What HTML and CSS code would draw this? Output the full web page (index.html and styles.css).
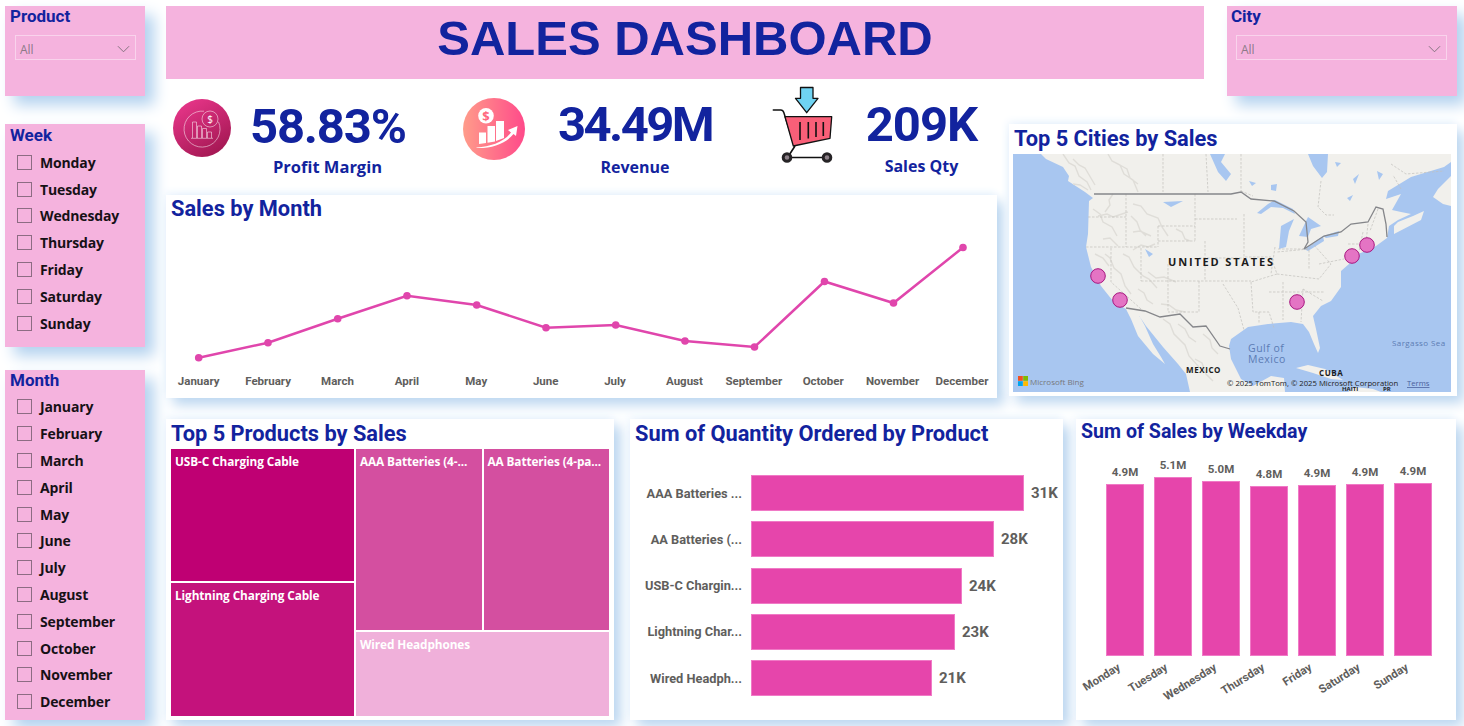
FILE: index.html
```html
<!DOCTYPE html>
<html lang="en">
<head>
    <meta charset="UTF-8">
    <meta name="viewport" content="width=device-width, initial-scale=1.0">
    <title>Sales Dashboard</title>
    <link rel="stylesheet" href="styles.css">
</head>
<body>
    <div class="page">
        <aside class="sidebar">
            <section class="panel panel-product">
                <h3 class="panel-title">Product</h3>
                <div class="dropdown"><span>All</span>
                    <svg class="chevron" viewBox="0 0 14 8"><path d="M1 1l6 6 6-6"/></svg>
                </div>
            </section>
            <section class="panel panel-week">
                <h3 class="panel-title">Week</h3>
                <ul class="slicer">
                    <li><i class="check"></i>Monday</li>
                    <li><i class="check"></i>Tuesday</li>
                    <li><i class="check"></i>Wednesday</li>
                    <li><i class="check"></i>Thursday</li>
                    <li><i class="check"></i>Friday</li>
                    <li><i class="check"></i>Saturday</li>
                    <li><i class="check"></i>Sunday</li>
                </ul>
            </section>
            <section class="panel panel-month">
                <h3 class="panel-title">Month</h3>
                <ul class="slicer">
                    <li><i class="check"></i>January</li>
                    <li><i class="check"></i>February</li>
                    <li><i class="check"></i>March</li>
                    <li><i class="check"></i>April</li>
                    <li><i class="check"></i>May</li>
                    <li><i class="check"></i>June</li>
                    <li><i class="check"></i>July</li>
                    <li><i class="check"></i>August</li>
                    <li><i class="check"></i>September</li>
                    <li><i class="check"></i>October</li>
                    <li><i class="check"></i>November</li>
                    <li><i class="check"></i>December</li>
                </ul>
            </section>
        </aside>

        <main class="main">
            <div class="upper">
                <header class="banner"><h1>SALES DASHBOARD</h1></header>

                <section class="panel panel-city">
                    <h3 class="panel-title">City</h3>
                    <div class="dropdown"><span>All</span>
                        <svg class="chevron" viewBox="0 0 14 8"><path d="M1 1l6 6 6-6"/></svg>
                    </div>
                </section>

                <div class="kpis">
                    <div class="kpi kpi-margin">
                        <svg class="kpi-icon" width="58" height="58" viewBox="0 0 58 58">
                            <defs>
                                <linearGradient id="gradMargin" x1="0.2" y1="0" x2="0.8" y2="1">
                                    <stop offset="0" stop-color="#e8368a"/>
                                    <stop offset="1" stop-color="#a01650"/>
                                </linearGradient>
                            </defs>
                            <circle cx="29" cy="29" r="29" fill="url(#gradMargin)"/>
                            <g fill="none" stroke="#fff" stroke-width="0.6" opacity="0.85">
                                <path d="M31 12.200a18 18 0 1 0 14.500 10.600"/>
                                <circle cx="37" cy="20" r="8"/>
                                <path d="M19.500 39V23h4v16M24.500 39V27h4v12M29.500 39v-9.500h4V39M34.500 39v-6h4v6M18 39.300h22"/>
                            </g>
                            <text class="icon-dollar" x="37" y="23.500" text-anchor="middle">$</text>
                        </svg>
                        <div class="kpi-text">
                            <div class="kpi-value">58.83%</div>
                            <div class="kpi-label">Profit Margin</div>
                        </div>
                    </div>

                    <div class="kpi kpi-revenue">
                        <svg class="kpi-icon" width="62" height="62" viewBox="0 0 62 62">
                            <defs>
                                <linearGradient id="gradRevenue" x1="0" y1="0" x2="1" y2="0">
                                    <stop offset="0" stop-color="#ff9c8a"/>
                                    <stop offset="1" stop-color="#ff4a8a"/>
                                </linearGradient>
                            </defs>
                            <circle cx="31" cy="31" r="31" fill="url(#gradRevenue)"/>
                            <circle cx="23" cy="17.700" r="7.800" fill="#fff"/>
                            <text class="icon-dollar-red" x="23" y="22.500" text-anchor="middle">$</text>
                            <path fill="#fff" d="M16 34.500h7v10.500l-7 1zM24.500 28h7.500v15.500l-7.500 1.200zM33 23h8v17l-8 3z"/>
                            <path fill="#fff" d="M13.500 49.500c14-1 27-5 34.500-15l-3-2.500 9.500-4-1.500 10-2.500-2c-8 10-22 14.500-37 14z"/>
                        </svg>
                        <div class="kpi-text">
                            <div class="kpi-value">34.49M</div>
                            <div class="kpi-label">Revenue</div>
                        </div>
                    </div>

                    <div class="kpi kpi-qty">
                        <svg class="kpi-icon" width="64" height="80" viewBox="0 0 64 80">
                            <path d="M30.500 2.500h12.500v10.800h5L36.700 27.700 25.500 13.300h5z" fill="#6fd3f2" stroke="#111" stroke-width="1.300" stroke-linejoin="round"/>
                            <path d="M3.300 25h7.500c1.500 0 2.500 1 3 2.500L23.500 58" fill="none" stroke="#111" stroke-width="1.500" stroke-linecap="round"/>
                            <path d="M15 31.700h46.700L60 53.300 23.300 61z" fill="#f95f78" stroke="#111" stroke-width="1.300" stroke-linejoin="round"/>
                            <path d="M30 37v18M38.300 37v16.500M46 37v15M53.300 37v14" stroke="#111" stroke-width="1.600" fill="none"/>
                            <path d="M25 61l-6.500 10M18 72.500h38" stroke="#111" stroke-width="1.600" fill="none"/>
                            <circle cx="17" cy="72.500" r="3.800" fill="#8c8088" stroke="#262326" stroke-width="3"/>
                            <circle cx="57" cy="72.500" r="3.800" fill="#8c8088" stroke="#262326" stroke-width="3"/>
                        </svg>
                        <div class="kpi-text">
                            <div class="kpi-value">209K</div>
                            <div class="kpi-label">Sales Qty</div>
                        </div>
                    </div>
                </div>

                <section class="card card-month">
                    <h2 class="card-title">Sales by Month</h2>
                    <svg class="line-chart" width="831" height="145" viewBox="0 0 831 145">
                        <polyline points="32.700,132.700 102,117.700 171.700,93.700 241,70.700 310.700,80 380,102.700 449.700,100 519,116 588.500,122 658.500,56.500 727.500,78 797,22.500"/>
                        <g>
                            <circle cx="32.700" cy="132.700" r="3.800"/>
                            <circle cx="102" cy="117.700" r="3.800"/>
                            <circle cx="171.700" cy="93.700" r="3.800"/>
                            <circle cx="241" cy="70.700" r="3.800"/>
                            <circle cx="310.700" cy="80" r="3.800"/>
                            <circle cx="380" cy="102.700" r="3.800"/>
                            <circle cx="449.700" cy="100" r="3.800"/>
                            <circle cx="519" cy="116" r="3.800"/>
                            <circle cx="588.500" cy="122" r="3.800"/>
                            <circle cx="658.500" cy="56.500" r="3.800"/>
                            <circle cx="727.500" cy="78" r="3.800"/>
                            <circle cx="797" cy="22.500" r="3.800"/>
                        </g>
                    </svg>
                    <div class="month-axis">
                        <span>January</span><span>February</span><span>March</span><span>April</span>
                        <span>May</span><span>June</span><span>July</span><span>August</span>
                        <span>September</span><span>October</span><span>November</span><span>December</span>
                    </div>
                </section>

                <section class="card card-map">
                    <h2 class="card-title">Top 5 Cities by Sales</h2>
                    <svg class="map" width="438" height="238" viewBox="0 0 438 238">
                        <rect width="438" height="238" fill="#a8c6f0"/>
                        <!-- land -->
                        <path class="land" d="M28 0L33 5 50 13 56 22 55 27 72 38 80 44 76 47 75 80 73 93 78 113 88 132 100 147 113 155 118 165 125 182 140 200 152 210 148 203 140 190 132 172 127 163 123 157 133 172 150 193 165 210 173 220 177 238H272L271 224 258 222 240 232 228 225 218 205 216 192 218 185 235 173 255 170 278 168 290 170 296 178 301 190 305 199 307 194 303 175 300 162 308 152 318 147 328 133 328 117 336 110 338 107 345 100 353 97 363 92 374 84 376 72 385 66 398 60 388 58 379 56 388 40 373 45 375 37 398 23 431 13 438 8V0H315L314 18 309 24 300 12 295 0Z"/>
                        <path class="land" d="M381 80L408 66 411 57 400 62 385 68 381 72Z"/>
                        <path class="land" d="M420 43L425 35 438 22V52L430 50Z"/>
                        <path class="land" d="M283 214L295 211 312 215 330 226 318 225 300 219Z"/>
                        <path class="land" d="M335 238L342 233 360 235 368 238Z"/>
                        <!-- lakes -->
                        <path class="water" d="M244 59L255 50 262 46 280 55 282 60 270 54 258 53 248 60ZM266 95L268 72 281 65 276 77 273 93ZM286 82L295 63 308 72 298 75 295 83ZM291 95L310 82 311 87 295 97ZM310 82L326 77 325 82 313 84ZM197 0L205 18 213 27 218 20 208 8 212 0ZM150 48L170 47 158 53ZM132 95L140 100 136 103ZM258 31L264 30 263 37 258 36ZM236 27L243 29 239 32ZM334 44L340 41 337 47ZM340 25L346 20 342 30ZM364 17L370 20 366 26ZM322 8L328 9 324 13Z"/>
                        <!-- terrain -->
                        <path class="terrain" d="M50 0L56 9 62 12 66 22 74 28 78 36M95 0L99 7 107 11 111 20 120 26 125 38M80 55L87 60 90 68 99 73 104 82M85 62L94 60 100 63 115 58M120 50L128 52 134 60 145 64 149 73 155 82M118 62L124 68 127 76 133 82M92 100L97 104 101 114 108 120 112 132 118 140M110 100L116 103 121 113 130 122 136 125 144 134M135 118L143 124 151 123 163 128M148 150L156 151 163 156 172 158M150 165L157 170 161 180 172 191 176 202 186 213M165 170L172 175 176 183 183 188M182 205L189 209 193 220 200 227M120 78L127 77 138 82M60 5L66 11 72 14 82 31M100 40L96 46 97 51 92 58M120 96L128 91 135 93 142 90M163 75L169 78 172 85 177 87M90 85L97 84 105 92M82 100L90 104 96 112M125 135L131 139 134 146 140 150M190 180L197 186 199 194 205 200M60 30L67 31 75 36M105 10L114 15 117 24 125 30"/>
                        <!-- state and province lines -->
                        <path class="state" d="M150 0V38M193 0L195 38M228 0V37M113 40V93M75 63H113M73 93H145M98 94V128L128 155M128 94V127M145 72H182M145 72V93M182 40V87M182 65H224M145 87H182M155 110V158M128 127H238M192 87V127M186 127V158H155M186 104H231M210 130L225 154 231 176M238 128L240 158H256L261 174M231 60V103H258L264 120 238 128M264 120L306 125 318 110 300 90 296 95 264 98M265 95H297M262 93L258 120M296 96V116M306 110L331 105M350 78L345 102M335 90H351M270 128V166M246 158V170M256 138H312M290 135L288 168M290 135L310 147M308 27L305 53 313 61H321M378 10L393 20 431 17M388 35L380 21M365 55L357 77M355 70L353 88M228 37L240 42"/>
                        <!-- national borders -->
                        <path class="border" d="M81 40H218L228 38 238 45 261 47 281 57 293 68 295 88 291 95 311 82 328 78 338 70 355 68 363 53 370 55 373 70 374 83"/>
                        <path class="border" d="M113 154L132 157 147 163 167 160 180 173 193 172 207 192 217 195"/>
                        <!-- labels -->
                        <text class="map-country" x="155" y="112" textLength="105">UNITED STATES</text>
                        <text class="map-sea" x="235" y="198">Gulf of</text>
                        <text class="map-sea" x="235" y="209">Mexico</text>
                        <text class="map-small-country" x="173" y="219">MEXICO</text>
                        <text class="map-small-country" x="306" y="222">CUBA</text>
                        <text class="map-tiny" x="329" y="237">HAITI</text>
                        <text class="map-tiny" x="370" y="237">PR</text>
                        <text class="map-sea-small" x="379" y="192">Sargasso Sea</text>
                        <!-- cities -->
                        <g class="cities">
                            <circle cx="85" cy="122" r="7.300"/>
                            <circle cx="107" cy="146" r="7.300"/>
                            <circle cx="284" cy="148" r="7.300"/>
                            <circle cx="339" cy="102" r="7.300"/>
                            <circle cx="354" cy="91" r="7.300"/>
                        </g>
                        <!-- bing logo -->
                        <rect x="5" y="222" width="4.800" height="4.800" fill="#f25022"/>
                        <rect x="10.200" y="222" width="4.800" height="4.800" fill="#7fba00"/>
                        <rect x="5" y="227.200" width="4.800" height="4.800" fill="#00a4ef"/>
                        <rect x="10.200" y="227.200" width="4.800" height="4.800" fill="#ffb900"/>
                        <text class="map-credit bing" x="17" y="230.500">Microsoft Bing</text>
                        <text class="map-credit" x="214" y="232">© 2025 TomTom, © 2025 Microsoft Corporation</text>
                        <text class="map-credit terms" x="394" y="232">Terms</text>
                    </svg>
                </section>
            </div>

            <div class="lower">
                <section class="card card-products">
                    <h2 class="card-title">Top 5 Products by Sales</h2>
                    <div class="treemap">
                        <div class="tm-col tm-left">
                            <div class="tile tile-usbc">USB-C Charging Cable</div>
                            <div class="tile tile-lightning">Lightning Charging Cable</div>
                        </div>
                        <div class="tm-col tm-right">
                            <div class="tm-row">
                                <div class="tile tile-aaa">AAA Batteries (4-...</div>
                                <div class="tile tile-aa">AA Batteries (4-pa...</div>
                            </div>
                            <div class="tile tile-wired">Wired Headphones</div>
                        </div>
                    </div>
                </section>

                <section class="card card-qty">
                    <h2 class="card-title">Sum of Quantity Ordered by Product</h2>
                    <div class="hbars">
                        <div class="hbar"><span class="hbar-label">AAA Batteries ...</span><span class="hbar-fill" style="width: 273px"></span><span class="hbar-value">31K</span></div>
                        <div class="hbar"><span class="hbar-label">AA Batteries (...</span><span class="hbar-fill" style="width: 243px"></span><span class="hbar-value">28K</span></div>
                        <div class="hbar"><span class="hbar-label">USB-C Chargin...</span><span class="hbar-fill" style="width: 211px"></span><span class="hbar-value">24K</span></div>
                        <div class="hbar"><span class="hbar-label">Lightning Char...</span><span class="hbar-fill" style="width: 204px"></span><span class="hbar-value">23K</span></div>
                        <div class="hbar"><span class="hbar-label">Wired Headph...</span><span class="hbar-fill" style="width: 181px"></span><span class="hbar-value">21K</span></div>
                    </div>
                </section>

                <section class="card card-weekday">
                    <h2 class="card-title">Sum of Sales by Weekday</h2>
                    <div class="vbars">
                        <div class="vbar"><span class="vbar-value">4.9M</span><span class="vbar-fill" style="height: 172px"></span><span class="vbar-label">Monday</span></div>
                        <div class="vbar"><span class="vbar-value">5.1M</span><span class="vbar-fill" style="height: 179px"></span><span class="vbar-label">Tuesday</span></div>
                        <div class="vbar"><span class="vbar-value">5.0M</span><span class="vbar-fill" style="height: 175px"></span><span class="vbar-label">Wednesday</span></div>
                        <div class="vbar"><span class="vbar-value">4.8M</span><span class="vbar-fill" style="height: 170px"></span><span class="vbar-label">Thursday</span></div>
                        <div class="vbar"><span class="vbar-value">4.9M</span><span class="vbar-fill" style="height: 171px"></span><span class="vbar-label">Friday</span></div>
                        <div class="vbar"><span class="vbar-value">4.9M</span><span class="vbar-fill" style="height: 172px"></span><span class="vbar-label">Saturday</span></div>
                        <div class="vbar"><span class="vbar-value">4.9M</span><span class="vbar-fill" style="height: 173px"></span><span class="vbar-label">Sunday</span></div>
                    </div>
                </section>
            </div>
        </main>
    </div>
</body>
</html>
```

FILE: styles.css
```css
* {
    box-sizing: border-box;
}

html, body {
    height: 100%;
}

body {
    margin: 0;
    background-color: #fff;
    font-family: Roboto, "Liberation Sans", sans-serif;
    overflow: hidden;
}

h1, h2, h3, ul {
    margin: 0;
    padding: 0;
}

.page {
    display: flex;
    gap: 21px;
    padding: 6px 0 0 5px;
}

/* left column with the slicers */
.sidebar {
    width: 140px;
    flex: none;
    display: flex;
    flex-direction: column;
}

.panel {
    background-color: #f5b3de;
    box-shadow: 9px 9px 14px #b3d2ef;
}

.panel-product { height: 90px; }
.panel-week { height: 223px; margin-top: 28px; }
.panel-month { height: 350px; margin-top: 23px; }

.panel-title {
    height: 25px;
    padding-left: 5px;
    font-size: 17px;
    line-height: 20px;
    font-weight: 700;
    color: #12239e;
}

.panel-week .panel-title {
    padding-top: 1px;
}

.panel-city .panel-title {
    padding-left: 4px;
}

.dropdown {
    display: flex;
    justify-content: space-between;
    align-items: center;
    height: 25px;
    margin: 4px 9px 0 10px;
    padding: 3px 5px 0 4px;
    border: 1px solid #f9d3ec;
    font-family: "Open Sans", sans-serif;
    font-size: 12px;
    color: #8d7a88;
}

.chevron {
    width: 13px;
    height: 8px;
    fill: none;
    stroke: #7d6f7a;
    stroke-width: 1;
}

.slicer {
    list-style: none;
}

.panel-month .slicer {
    margin-top: -1.5px;
}

.slicer li {
    display: flex;
    align-items: center;
    gap: 8px;
    height: 26.8px;
    padding-left: 12px;
    font-family: "Open Sans", sans-serif;
    font-size: 14px;
    font-weight: 700;
    letter-spacing: -0.15px;
    color: #161116;
}

.check {
    width: 15px;
    height: 15px;
    border: 1px solid #8d6c83;
}

/* main area */
.main {
    width: 1291px;
    flex: none;
}

.upper {
    display: grid;
    grid-template-columns: 831px 12px 195px 23px 230px;
    grid-template-rows: 73px 45px 71px 203px;
}

.banner {
    grid-column: 1 / 4;
    grid-row: 1;
    display: flex;
    align-items: center;
    justify-content: center;
    background-color: #f5b3de;
}

.banner h1 {
    font-family: "Liberation Sans", Arial, sans-serif;
    font-size: 49px;
    font-weight: 700;
    color: #12239e;
    padding-bottom: 10px;
}

.panel-city {
    grid-column: 5;
    grid-row: 1 / 3;
    height: 90px;
}

.panel-city .dropdown {
    margin-left: 9px;
    margin-right: 10px;
}

.kpis {
    grid-column: 1;
    grid-row: 2 / 4;
    display: flex;
    align-items: flex-start;
}

.kpi {
    display: flex;
    flex: none;
}

.kpi-margin { margin-left: 7px; padding-top: 20px; }
.kpi-revenue { margin-left: 58px; padding-top: 19px; }
.kpi-qty { margin-left: 58px; padding-top: 6px; }

.kpi-margin .kpi-icon { margin-right: 19px; }
.kpi-revenue .kpi-icon { margin-right: 33px; }
.kpi-qty .kpi-icon { margin-right: 31px; }

.kpi-text {
    text-align: center;
}

.kpi-margin .kpi-text { width: 155px; }
.kpi-revenue .kpi-text { width: 154px; margin-top: -1px; }
.kpi-qty .kpi-text { width: 113px; margin-top: 12px; }

.kpi-value {
    font-size: 49px;
    line-height: 56px;
    font-weight: 700;
    color: #12239e;
    white-space: nowrap;
}

.kpi-margin .kpi-value { letter-spacing: -1.2px; }
.kpi-revenue .kpi-value { letter-spacing: -2.6px; }
.kpi-qty .kpi-value { letter-spacing: -1px; }

.kpi-label {
    font-family: "Open Sans", sans-serif;
    font-size: 16px;
    line-height: 22px;
    font-weight: 700;
    color: #12239e;
    white-space: nowrap;
}

.kpi-margin .kpi-label { font-size: 16.500px; margin-top: 1px; }
.kpi-revenue .kpi-label { margin-top: 3px; }
.kpi-qty .kpi-label { margin-top: 2px; }

.icon-dollar {
    font-family: "Open Sans", sans-serif;
    font-size: 10px;
    fill: #fff;
}

.icon-dollar-red {
    font-family: "Open Sans", sans-serif;
    font-size: 13px;
    font-weight: 700;
    fill: #ff6a80;
}

.card {
    background-color: #fff;
    box-shadow: 7px 7px 12px #bbd6f0, -2px -3px 8px #eff6fd;
}

.card-title {
    height: 30px;
    padding-left: 5px;
    font-size: 21.800px;
    line-height: 27px;
    font-weight: 700;
    color: #12239e;
    white-space: nowrap;
}

.card-map .card-title,
.card-products .card-title,
.card-qty .card-title {
    padding-top: 1px;
}

.card-month {
    grid-column: 1;
    grid-row: 4;
}

.line-chart {
    display: block;
}

.line-chart polyline {
    fill: none;
    stroke: #e046ac;
    stroke-width: 2.500;
}

.line-chart circle {
    fill: #e046ac;
}

.month-axis {
    display: flex;
    margin: 3px 0 0 -2px;
}

.month-axis span {
    width: 69.4px;
    flex: none;
    text-align: center;
    font-size: 11.500px;
    line-height: 16px;
    font-weight: 700;
    color: #605e5c;
}

.card-map {
    grid-column: 3 / 6;
    grid-row: 3 / 5;
    height: 272px;
    align-self: start;
}

.map {
    display: block;
    margin-left: 4px;
}

.land { fill: #f1f0ec; }
.water { fill: #a8c6f0; }
.terrain { fill: none; stroke: #dfddd8; stroke-width: 1.400; }
.state { fill: none; stroke: #c2c0bb; stroke-width: 0.700; stroke-dasharray: 2.500 1.500; }
.border { fill: none; stroke: #85868a; stroke-width: 1.300; }

.map-country {
    font-family: "Open Sans", sans-serif;
    font-size: 11px;
    font-weight: 700;
    fill: #1c1c1c;
}

.map-small-country {
    font-family: "Open Sans", sans-serif;
    font-size: 8px;
    font-weight: 700;
    letter-spacing: 0.6px;
    fill: #1c1c1c;
}

.map-tiny {
    font-family: "Open Sans", sans-serif;
    font-size: 6px;
    font-weight: 700;
    fill: #1c1c1c;
}

.map-sea {
    font-family: "Open Sans", sans-serif;
    font-size: 10.500px;
    letter-spacing: 0.5px;
    fill: #5c7cb4;
}

.map-sea-small {
    font-family: "Open Sans", sans-serif;
    font-size: 8px;
    letter-spacing: 0.4px;
    fill: #5c7cb4;
}

.map-credit {
    font-family: "Open Sans", sans-serif;
    font-size: 7.700px;
    fill: #222;
}

.bing { fill: #77787c; font-size: 8px; }
.terms { fill: #4a5f9c; text-decoration: underline; }

.cities circle {
    fill: #e474c4;
    stroke: #a81680;
    stroke-width: 1;
}

/* bottom row */
.lower {
    display: flex;
    margin-top: 21px;
}

.lower .card {
    height: 301px;
    flex: none;
}

.card-products { width: 448px; }
.card-qty { width: 433px; margin-left: 16px; }
.card-weekday { width: 380px; margin-left: 13px; }

.treemap {
    display: flex;
    gap: 2px;
    width: 438px;
    height: 267px;
    margin-left: 5px;
}

.tm-col {
    display: flex;
    flex-direction: column;
    gap: 2px;
}

.tm-left { width: 183px; }
.tm-right { width: 253px; }

.tm-row {
    display: flex;
    gap: 2px;
    height: 181px;
}

.tile {
    flex: 1;
    padding: 5px 4px;
    font-family: "Open Sans", sans-serif;
    font-size: 11.800px;
    line-height: 15px;
    font-weight: 700;
    letter-spacing: -0.1px;
    color: #fff;
    white-space: nowrap;
    overflow: hidden;
}

.tile-usbc { background-color: #bf0073; flex: 132; }
.tile-lightning { background-color: #c4127c; flex: 133; }
.tile-aaa { background-color: #d44fa0; }
.tile-aa { background-color: #d44fa0; }
.tile-wired { background-color: #f0b0da; }

.hbars {
    display: flex;
    flex-direction: column;
    gap: 10.300px;
    padding-top: 26px;
}

.hbar {
    display: flex;
    align-items: center;
    height: 36px;
}

.hbar-label {
    width: 112px;
    margin-right: 9px;
    text-align: right;
    font-size: 12.800px;
    font-weight: 700;
    color: #605e5c;
    white-space: nowrap;
}

.hbar-fill {
    height: 36px;
    background-color: #e645ab;
    border: 1px solid #f07ac6;
}

.hbar-value {
    margin-left: 7px;
    font-size: 15px;
    font-weight: 700;
    color: #605e5c;
}

.card-weekday .card-title {
    padding-top: 1px;
    font-size: 19.600px;
    line-height: 24px;
}

.vbars {
    display: flex;
    align-items: flex-end;
    height: 207px;
    padding-left: 25px;
}

.vbar {
    position: relative;
    display: flex;
    flex-direction: column;
    align-items: center;
    width: 48px;
}

.vbar-value {
    height: 19px;
    font-size: 11.500px;
    line-height: 14px;
    font-weight: 700;
    color: #605e5c;
}

.vbar-fill {
    width: 38px;
    background-color: #e645ab;
    border: 1px solid #f07ac6;
}

/* slanted weekday names hang under the bars */
.vbar-label {
    position: absolute;
    top: 100%;
    right: calc(50% + 10px);
    margin-top: 4px;
    font-size: 11.500px;
    line-height: 14px;
    font-weight: 700;
    color: #605e5c;
    white-space: nowrap;
    transform: rotate(-32deg);
    transform-origin: right top;
}
```
